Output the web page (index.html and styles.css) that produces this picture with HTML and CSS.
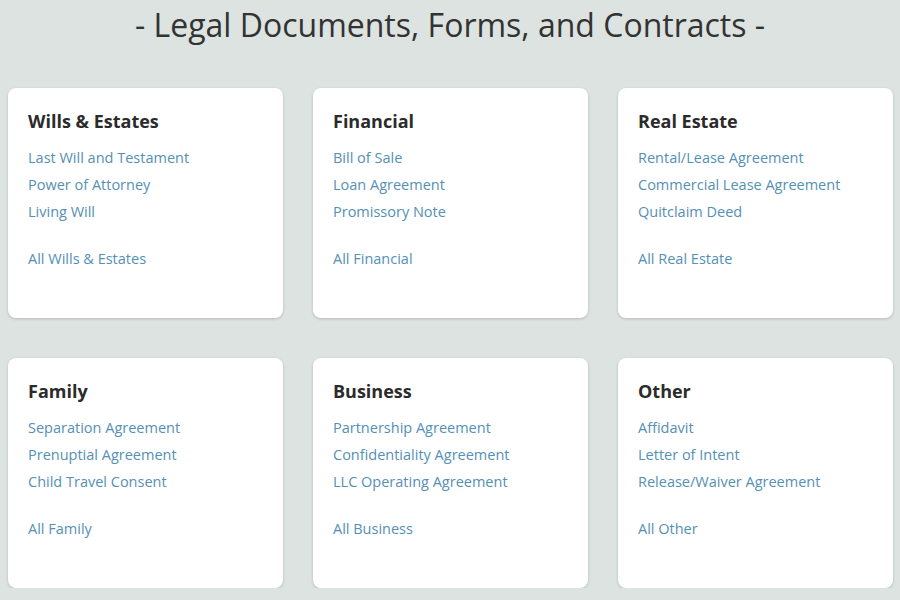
FILE: index.html
```html
<!DOCTYPE html>
<html>
<head>
<meta charset="utf-8">
<link rel="stylesheet" href="styles.css">
</head>
<body>
<h1 class="page-title">- Legal Documents, Forms, and Contracts -</h1>
<div class="grid">
  <div class="card">
    <h2 class="card-title">Wills &amp; Estates</h2>
    <ul class="links">
      <li><a href="#">Last Will and Testament</a></li>
      <li><a href="#">Power of Attorney</a></li>
      <li><a href="#">Living Will</a></li>
    </ul>
    <a class="all" href="#">All Wills &amp; Estates</a>
  </div>
  <div class="card">
    <h2 class="card-title">Financial</h2>
    <ul class="links">
      <li><a href="#">Bill of Sale</a></li>
      <li><a href="#">Loan Agreement</a></li>
      <li><a href="#">Promissory Note</a></li>
    </ul>
    <a class="all" href="#">All Financial</a>
  </div>
  <div class="card">
    <h2 class="card-title">Real Estate</h2>
    <ul class="links">
      <li><a href="#">Rental/Lease Agreement</a></li>
      <li><a href="#">Commercial Lease Agreement</a></li>
      <li><a href="#">Quitclaim Deed</a></li>
    </ul>
    <a class="all" href="#">All Real Estate</a>
  </div>
  <div class="card">
    <h2 class="card-title">Family</h2>
    <ul class="links">
      <li><a href="#">Separation Agreement</a></li>
      <li><a href="#">Prenuptial Agreement</a></li>
      <li><a href="#">Child Travel Consent</a></li>
    </ul>
    <a class="all" href="#">All Family</a>
  </div>
  <div class="card">
    <h2 class="card-title">Business</h2>
    <ul class="links">
      <li><a href="#">Partnership Agreement</a></li>
      <li><a href="#">Confidentiality Agreement</a></li>
      <li><a href="#">LLC Operating Agreement</a></li>
    </ul>
    <a class="all" href="#">All Business</a>
  </div>
  <div class="card">
    <h2 class="card-title">Other</h2>
    <ul class="links">
      <li><a href="#">Affidavit</a></li>
      <li><a href="#">Letter of Intent</a></li>
      <li><a href="#">Release/Waiver Agreement</a></li>
    </ul>
    <a class="all" href="#">All Other</a>
  </div>
</div>
</body>
</html>
```
FILE: styles.css
```css
html, body {
  margin: 0;
  padding: 0;
  background: #dce3e0;
  font-family: "Open Sans", "Liberation Sans", sans-serif;
}
.page-title {
  margin: 0;
  height: 88px;
  padding-top: 3px;
  box-sizing: border-box;
  text-align: center;
  font-size: 32px;
  line-height: 44px;
  font-weight: 400;
  color: #333;
}
.grid {
  display: grid;
  grid-template-columns: repeat(3, 275px);
  column-gap: 30px;
  row-gap: 40px;
  padding-left: 8px;
}
.card {
  height: 230px;
  box-sizing: border-box;
  background: #fff;
  border-radius: 8px;
  box-shadow: 0 1px 3px rgba(0, 0, 0, 0.18);
  padding: 20px 20px;
}
.card-title {
  margin: 0 0 10px;
  font-size: 18px;
  line-height: 26px;
  font-weight: 700;
  color: #2b2b2b;
}
.links {
  list-style: none;
  margin: 0;
  padding: 0;
}
.links li {
  line-height: 27px;
}
a {
  color: #5590b5;
  text-decoration: none;
  font-size: 14.5px;
}
.all {
  display: block;
  margin-top: 20px;
  line-height: 27px;
}
```
